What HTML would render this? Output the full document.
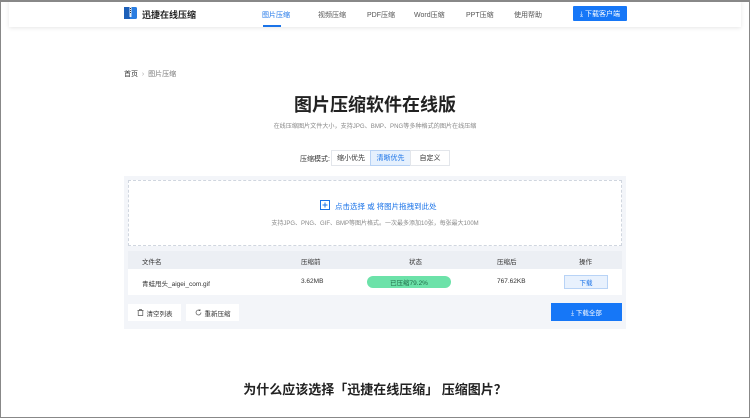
<!DOCTYPE html>
<html><head><meta charset="utf-8"><style>
*{margin:0;padding:0;box-sizing:border-box}
body{width:750px;height:418px;overflow:hidden;background:#fff;font-family:"Liberation Sans","Noto Sans CJK SC",sans-serif;position:relative;color:#333}
.frame{position:absolute;left:0;top:0;width:750px;height:418px;border:1px solid #888;border-top-width:2px;z-index:10;pointer-events:none}
.a{position:absolute;white-space:nowrap}
.hdr{position:absolute;left:9px;top:0;width:732px;height:27px;background:#fff;box-shadow:0 1px 4px rgba(0,0,0,.1)}
.nav{font-size:7px;color:#555;top:10px}
.btn{position:absolute;display:flex;align-items:center;justify-content:center;font-size:7px}
</style></head><body>
<div class="hdr"></div>
<svg class="a" style="left:124px;top:6px" width="13" height="13" viewBox="0 0 13 13"><rect x="0" y="1" width="13" height="12" rx="1.5" fill="#2a7de1"/><rect x="0" y="1" width="6" height="12" fill="#1c5fb8"/><rect x="5.5" y="1" width="2" height="10" fill="#e8f1fb"/><rect x="6" y="2" width="1" height="1" fill="#333"/><rect x="6" y="4" width="1" height="1" fill="#333"/><rect x="6" y="6" width="1" height="1" fill="#333"/></svg>
<div class="a" style="left:142px;top:8px;font-size:9px;font-weight:bold;color:#222">迅捷在线压缩</div>
<div class="a nav" style="left:262px;color:#1a73e8">图片压缩</div>
<div class="a" style="left:263px;top:25px;width:18px;height:2px;background:#1a73e8"></div>
<div class="a nav" style="left:318px">视频压缩</div>
<div class="a nav" style="left:367px">PDF压缩</div>
<div class="a nav" style="left:414px">Word压缩</div>
<div class="a nav" style="left:466px">PPT压缩</div>
<div class="a nav" style="left:514px">使用帮助</div>
<div class="btn" style="left:573px;top:6px;width:54px;height:15px;background:#1677f7;color:#fff;border-radius:1px">⤓&nbsp;下载客户端</div>

<div class="a" style="left:124px;top:69px;font-size:7px;color:#333">首页 <span style="color:#aaa">&nbsp;›&nbsp;</span> <span style="color:#777">图片压缩</span></div>
<div class="a" style="left:0;width:750px;text-align:center;top:91px;font-size:18px;font-weight:bold;color:#222">图片压缩软件在线版</div>
<div class="a" style="left:0;width:750px;text-align:center;top:121px;font-size:6.1px;color:#888">在线压缩图片文件大小，支持JPG、BMP、PNG等多种格式的图片在线压缩</div>

<div class="a" style="left:300px;top:154px;font-size:7px;color:#333">压缩模式:</div>
<div class="btn" style="left:331px;top:150px;width:40px;height:16px;border:1px solid #e3e6eb;color:#333">缩小优先</div>
<div class="btn" style="left:370px;top:150px;width:41px;height:16px;border:1px solid #b7d2f5;background:#e5f0fd;color:#1a73e8">清晰优先</div>
<div class="btn" style="left:410px;top:150px;width:40px;height:16px;border:1px solid #e3e6eb;color:#333">自定义</div>

<div class="a" style="left:124px;top:176px;width:502px;height:153px;background:#f3f5f9"></div>
<div class="a" style="left:128px;top:180px;width:494px;height:66px;background:#fff;border:1px dashed #d0d6df"></div>
<svg class="a" style="left:320px;top:200px" width="10" height="10" viewBox="0 0 10 10"><rect x="0.5" y="0.5" width="9" height="9" fill="none" stroke="#1a73e8"/><path d="M5 2.5V7.5M2.5 5H7.5" stroke="#1a73e8" stroke-width="1"/></svg>
<div class="a" style="left:335px;top:201px;font-size:7.5px;color:#1a73e8">点击选择 或 将图片拖拽到此处</div>
<div class="a" style="left:0;width:750px;text-align:center;top:218px;font-size:6px;color:#888">支持JPG、PNG、GIF、BMP等图片格式。一次最多添加10张，每张最大100M</div>

<div class="a" style="left:128px;top:251px;width:494px;height:18px;background:#eceff4"></div>
<div class="a" style="left:142px;top:256px;font-size:6.5px;color:#333">文件名</div>
<div class="a" style="left:301px;top:256px;font-size:6.5px;color:#333">压缩前</div>
<div class="a" style="left:409px;top:256px;font-size:6.5px;color:#333">状态</div>
<div class="a" style="left:497px;top:256px;font-size:6.5px;color:#333">压缩后</div>
<div class="a" style="left:579px;top:256px;font-size:6.5px;color:#333">操作</div>
<div class="a" style="left:128px;top:269px;width:494px;height:26px;background:#fff"></div>
<div class="a" style="left:142px;top:278px;font-size:6.5px;color:#333">青蛙甩头_aigei_com.gif</div>
<div class="a" style="left:301px;top:278px;font-size:6.5px;color:#333">3.62MB</div>
<div class="btn" style="left:367px;top:276px;width:84px;height:12px;border-radius:6px;background:#6ce2a9;color:#1f6b47;font-size:6.5px">已压缩79.2%</div>
<div class="a" style="left:497px;top:278px;font-size:6.5px;color:#333">767.62KB</div>
<div class="btn" style="left:564px;top:275px;width:44px;height:14px;background:#e8f1fd;border:1px solid #b8d3f6;color:#1a73e8;font-size:6.5px">下载</div>

<div class="btn" style="left:128px;top:304px;width:53px;height:17px;background:#fff;color:#333;font-size:6.5px"><svg width="7" height="7" viewBox="0 0 7 7" style="margin-right:3px"><path d="M0.5 1.5H6.5M2.5 1.5V0.5H4.5V1.5M1.2 1.5V6.5H5.8V1.5" fill="none" stroke="#555" stroke-width="0.7"/></svg>清空列表</div>
<div class="btn" style="left:186px;top:304px;width:53px;height:17px;background:#fff;color:#333;font-size:6.5px"><svg width="7" height="7" viewBox="0 0 7 7" style="margin-right:3px"><path d="M6 3.5A2.5 2.5 0 1 1 5 1.5M5 0.3V1.7H3.6" fill="none" stroke="#555" stroke-width="0.7"/></svg>重新压缩</div>
<div class="btn" style="left:551px;top:303px;width:71px;height:18px;background:#1677f7;color:#fff;font-size:6.5px">⤓&nbsp;下载全部</div>

<div class="a" style="left:0;width:750px;text-align:center;top:379px;font-size:13px;font-weight:bold;color:#222">为什么应该选择「迅捷在线压缩」 压缩图片？</div>
<div class="frame"></div>
</body></html>
